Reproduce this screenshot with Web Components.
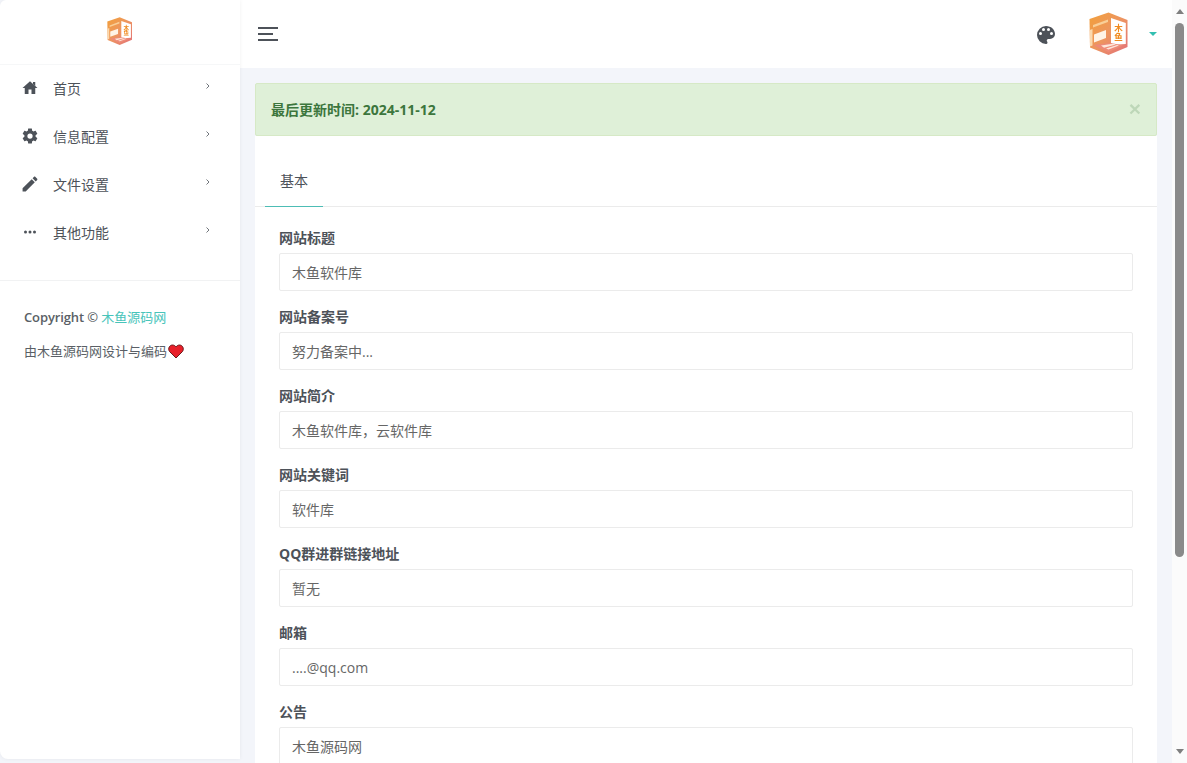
<!DOCTYPE html>
<html lang="zh">
<head>
<meta charset="utf-8">
<title>网站设置</title>
<style>
  html, body { margin: 0; height: 100%; overflow: hidden; background: #fff; }
  body { font-family: "Open Sans", "Noto Sans CJK SC", sans-serif; font-size: 14px; color: #4d5259; }
</style>
</head>
<body>
<app-shell>
  <side-nav slot="side">
    <nav-item icon="home">首页</nav-item>
    <nav-item icon="cog">信息配置</nav-item>
    <nav-item icon="pencil">文件设置</nav-item>
    <nav-item icon="dots">其他功能</nav-item>
  </side-nav>
  <top-bar slot="top"></top-bar>
  <alert-box>最后更新时间: 2024-11-12</alert-box>
  <form-card>
    <form-field label="网站标题">木鱼软件库</form-field>
    <form-field label="网站备案号">努力备案中...</form-field>
    <form-field label="网站简介">木鱼软件库，云软件库</form-field>
    <form-field label="网站关键词">软件库</form-field>
    <form-field label="QQ群进群链接地址">暂无</form-field>
    <form-field label="邮箱">....@qq.com</form-field>
    <form-field label="公告">木鱼源码网</form-field>
  </form-card>
  <window-scrollbar slot="bar"></window-scrollbar>
</app-shell>

<script>
const ICONS = {
  home: '<path d="M10,20V14H14V20H19V12H22L12,3L2,12H5V20H10Z"/><path d="M16,4H19V9.500L16,6.500Z"/>',
  cog: '<path d="M12,15.5A3.5,3.5 0 0,1 8.5,12A3.5,3.5 0 0,1 12,8.5A3.5,3.5 0 0,1 15.5,12A3.5,3.5 0 0,1 12,15.5M19.43,12.97C19.47,12.65 19.5,12.33 19.5,12C19.5,11.67 19.47,11.34 19.43,11L21.54,9.37C21.73,9.22 21.78,8.95 21.66,8.73L19.66,5.27C19.54,5.05 19.27,4.96 19.05,5.05L16.56,6.05C16.04,5.66 15.5,5.32 14.87,5.07L14.5,2.42C14.46,2.18 14.25,2 14,2H10C9.75,2 9.54,2.18 9.5,2.42L9.13,5.07C8.5,5.32 7.96,5.66 7.44,6.05L4.95,5.05C4.73,4.96 4.46,5.05 4.34,5.27L2.34,8.73C2.21,8.95 2.27,9.22 2.46,9.37L4.57,11C4.53,11.34 4.5,11.67 4.5,12C4.5,12.33 4.53,12.65 4.57,12.97L2.46,14.63C2.27,14.78 2.21,15.05 2.34,15.27L4.34,18.73C4.46,18.95 4.73,19.03 4.95,18.95L7.44,17.94C7.96,18.34 8.5,18.68 9.13,18.93L9.5,21.58C9.54,21.82 9.75,22 10,22H14C14.25,22 14.46,21.82 14.5,21.58L14.87,18.93C15.5,18.67 16.04,18.34 16.56,17.94L19.05,18.95C19.27,19.03 19.54,18.95 19.66,18.73L21.66,15.27C21.78,15.05 21.73,14.78 21.54,14.63L19.43,12.97Z"/>',
  pencil: '<path transform="translate(-1.200 -1.200) scale(1.100)" d="M20.71,7.04C21.1,6.65 21.1,6 20.71,5.63L18.37,3.29C18,2.9 17.35,2.9 16.96,3.29L15.12,5.12L18.87,8.87M3,17.25V21H6.75L17.81,9.93L14.06,6.18L3,17.25Z"/>',
  dots: '<circle cx="6" cy="12" r="2"/><circle cx="12" cy="12" r="2"/><circle cx="18" cy="12" r="2"/>',
  palette: '<path d="M17.5,12A1.5,1.5 0 0,1 16,10.5A1.5,1.5 0 0,1 17.5,9A1.5,1.5 0 0,1 19,10.5A1.5,1.5 0 0,1 17.5,12M14.5,8A1.5,1.5 0 0,1 13,6.5A1.5,1.5 0 0,1 14.5,5A1.5,1.5 0 0,1 16,6.5A1.5,1.5 0 0,1 14.5,8M9.5,8A1.5,1.5 0 0,1 8,6.5A1.5,1.5 0 0,1 9.5,5A1.5,1.5 0 0,1 11,6.5A1.5,1.5 0 0,1 9.5,8M6.5,12A1.5,1.5 0 0,1 5,10.5A1.5,1.5 0 0,1 6.5,9A1.5,1.5 0 0,1 8,10.5A1.5,1.5 0 0,1 6.5,12M12,3A9,9 0 0,0 3,12A9,9 0 0,0 12,21A1.5,1.5 0 0,0 13.5,19.5C13.5,19.11 13.35,18.76 13.11,18.5C12.88,18.23 12.73,17.88 12.73,17.5A1.5,1.5 0 0,1 14.23,16H16A5,5 0 0,0 21,11C21,6.58 16.97,3 12,3Z"/>'
};

let logoId = 0;
class BrandLogo extends HTMLElement {
  connectedCallback() {
    const id = 'g' + (++logoId);
    const w = this.getAttribute('size') || 40;
    this.attachShadow({ mode: 'open' }).innerHTML = `
      <style>
        :host { display: block; line-height: 0; }
        svg { filter: blur(.5px); display: block; }
      </style>
      <svg width="${w}" height="${w * 1.1}" viewBox="0 0 40 44">
        <defs>
          <linearGradient id="${id}" x1="0" y1="0" x2="1" y2="1">
            <stop offset="0" stop-color="#f2a03a"/>
            <stop offset=".5" stop-color="#ed9560"/>
            <stop offset="1" stop-color="#e2707a"/>
          </linearGradient>
        </defs>
        <path d="M19.500 .5 38.500 8V35L19.500 43 1 35.500 .5 7Z" fill="url(#${id})"/>
        <path d="M22 6 36.800 11V32L22 33Z" fill="#fff"/>
        <path d="M.8 18 3.500 17V33.500L1 34.500Z" fill="#fbd9ad"/>
        <path d="M4 13 19 7.500V10L4 15.500Z" fill="#f9cf98"/>
        <path d="M5 22.500 17 18V26L5 30.500Z" fill="#fff4e6"/>
        <path d="M4 33 22 31 34 33.500 19.500 40Z" fill="#ee8a78"/>
        <path d="M12 33.500 24 31.800 27 32.500 15 35.800Z" fill="#fde6da"/>
        <path d="M17 36.500 28 33 30 33.600 19.500 37.500Z" fill="#fde6da"/>
        <text x="29.500" y="12" font-size="8.500" font-weight="700" fill="#f08a1e" style="writing-mode: vertical-rl" font-family="'Noto Sans CJK SC', sans-serif">木鱼</text>
      </svg>`;
  }
}

class AppShell extends HTMLElement {
  constructor() {
    super();
    this.attachShadow({ mode: 'open' }).innerHTML = `
      <style>
        :host { display: flex; height: 763px; overflow: hidden; background: #f3f5fa; }
        .main { flex: 1; min-width: 0; display: flex; flex-direction: column; overflow: hidden; }
        .content { padding: 15px 15px 0 15px; display: flex; flex-direction: column; }
      </style>
      <slot name="side"></slot>
      <div class="main">
        <slot name="top"></slot>
        <div class="content"><slot></slot></div>
      </div>
      <slot name="bar"></slot>`;
  }
}

class SideNav extends HTMLElement {
  constructor() {
    super();
    this.attachShadow({ mode: 'open' }).innerHTML = `
      <style>
        :host { display: flex; flex-direction: column; flex: 0 0 240px; width: 240px; height: 759px; background: #fff;
          box-shadow: 0 0 4px rgba(0,0,0,.06); position: relative; z-index: 2; border-radius: 6px 0 0 8px; }
        .brand { height: 65px; display: flex; justify-content: center; align-items: center; padding: 0 0 2px 0;
          border-bottom: 1px solid #f6f7f8; box-sizing: border-box; }
        .menu { margin-top: -1px; padding: 0 0 24px; border-bottom: 1px solid #f1f2f3; }
        .foot { padding: 27px 24px; font-size: 13px; line-height: 18px; color: #5a5f66; }
        .copy { font-weight: 600; letter-spacing: -.12px; }
        a { color: #48c4ba; font-weight: 400; text-decoration: none; letter-spacing: 0; }
        .made { margin-top: 16px; display: flex; align-items: center; }
        .made svg { margin-left: 1px; }
      </style>
      <div class="brand"><brand-logo size="26"></brand-logo></div>
      <div class="menu"><slot></slot></div>
      <div class="foot">
        <div class="copy">Copyright © <a href="#">木鱼源码网</a></div>
        <div class="made">由木鱼源码网设计与编码
          <svg width="16" height="15" viewBox="0 0 16 15"><path d="M8 14 1.500 7.500C-.500 4.500 1.500 1 4.500 1 6 1 7.300 1.800 8 3 8.700 1.800 10 1 11.500 1 14.500 1 16.500 4.500 14.500 7.500Z" fill="#e8202a" stroke="#5a1010" stroke-width=".9"/></svg>
        </div>
      </div>`;
  }
}

class NavItem extends HTMLElement {
  connectedCallback() {
    this.attachShadow({ mode: 'open' }).innerHTML = `
      <style>
        :host { display: flex; align-items: center; height: 48px; padding: 0 28px 0 21px; color: #4d5259; font-size: 14px; box-sizing: border-box; }
        svg.i { width: 18px; height: 18px; fill: #4d5259; flex: none; }
        .t { margin-left: 14px; flex: 1; }
        svg.c { width: 8px; height: 8px; margin: -4px 0 0; fill: none; stroke: #70757b; stroke-width: 1; flex: none; }
      </style>
      <svg class="i" viewBox="0 0 24 24">${ICONS[this.getAttribute('icon')]}</svg>
      <span class="t"><slot></slot></span>
      <svg class="c" viewBox="0 0 8 8"><path d="M2.500 1.500 5 4 2.500 6.500"/></svg>`;
  }
}

class TopBar extends HTMLElement {
  constructor() {
    super();
    this.attachShadow({ mode: 'open' }).innerHTML = `
      <style>
        :host { display: flex; align-items: center; height: 68px; flex: none; background: #fff; padding: 0 15px 0 18px; box-sizing: border-box; }
        .burger { width: 20px; display: flex; flex-direction: column; gap: 4px; }
        .burger i { display: block; height: 2px; background: #4d5259; }
        .burger i:nth-child(2) { width: 15px; }
        .right { margin-left: auto; display: flex; align-items: center; }
        .pal { width: 24px; height: 24px; fill: #4d5259; margin: 2px 31px 0 0; }
        .caret { width: 0; height: 0; margin: 0 0 0 20px; border: 4px solid transparent; border-top: 4px solid #33bfb1; border-bottom: 0; }
      </style>
      <div class="burger"><i></i><i></i><i></i></div>
      <div class="right">
        <svg class="pal" viewBox="0 0 24 24">${ICONS.palette}</svg>
        <brand-logo size="40"></brand-logo>
        <span class="caret"></span>
      </div>`;
  }
}

class AlertBox extends HTMLElement {
  constructor() {
    super();
    this.attachShadow({ mode: 'open' }).innerHTML = `
      <style>
        :host { display: flex; align-items: center; justify-content: space-between; height: 53px; box-sizing: border-box;
          padding: 0 15px 2px; background: #dff0d8; border: 1px solid #d6e9c6; border-radius: 2px; color: #3c763d; font-weight: 700; font-size: 14px; }
        .x { color: #3c763d; opacity: .2; font-size: 21px; font-weight: 700; line-height: 1; font-family: "Liberation Sans", sans-serif; }
      </style>
      <span><slot></slot></span><span class="x">×</span>`;
  }
}

class FormCard extends HTMLElement {
  constructor() {
    super();
    this.attachShadow({ mode: 'open' }).innerHTML = `
      <style>
        :host { display: block; background: #fff; }
        .tabs { height: 71px; border-bottom: 1px solid #ebebeb; padding: 0 0 0 10px; display: flex; box-sizing: border-box; }
        .tab { height: 71px; width: 58px; box-sizing: border-box; border-bottom: 1px solid #4dbdb5;
          display: flex; justify-content: center; align-items: center; font-size: 14px; padding-top: 17px; }
        .body { padding: 21px 24px 0; }
      </style>
      <div class="tabs"><div class="tab">基本</div></div>
      <div class="body"><slot></slot></div>`;
  }
}

class FormField extends HTMLElement {
  connectedCallback() {
    this.attachShadow({ mode: 'open' }).innerHTML = `
      <style>
        :host { display: block; height: 79px; }
        label { display: block; height: 25px; line-height: 20px; font-weight: 700; font-size: 14px; color: #4d5259; }
        .input { height: 38px; box-sizing: border-box; border: 1px solid #ebebeb; border-radius: 2px; padding: 0 12px;
          display: flex; align-items: center; color: #666; font-size: 14px; background: #fff; }
      </style>
      <label>${this.getAttribute('label')}</label>
      <div class="input"><slot></slot></div>`;
  }
}

class WindowScrollbar extends HTMLElement {
  constructor() {
    super();
    this.attachShadow({ mode: 'open' }).innerHTML = `
      <style>
        :host { display: flex; flex-direction: column; align-items: center; flex: 0 0 15px; width: 15px; height: 763px; background: #fbfbfb; box-sizing: border-box; padding-top: 9px; }
        .up, .down { width: 0; height: 0; border: 4.500px solid transparent; }
        .up { border-bottom: 5px solid #7f7f7f; border-top: 0; }
        .down { border-top: 5px solid #7f7f7f; border-bottom: 0; margin-top: auto; margin-bottom: 9px; }
        .thumb { width: 9px; height: 534px; margin-top: 9px; border-radius: 5px; background: #8a8a8a; }
      </style>
      <div class="up"></div><div class="thumb"></div><div class="down"></div>`;
  }
}

customElements.define('brand-logo', BrandLogo);
customElements.define('app-shell', AppShell);
customElements.define('side-nav', SideNav);
customElements.define('nav-item', NavItem);
customElements.define('top-bar', TopBar);
customElements.define('alert-box', AlertBox);
customElements.define('form-card', FormCard);
customElements.define('form-field', FormField);
customElements.define('window-scrollbar', WindowScrollbar);
</script>
</body>
</html>
